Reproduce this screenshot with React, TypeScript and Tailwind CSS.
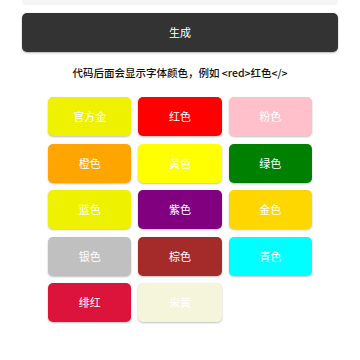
import React from 'react';

const colors: { name: string; bg: string }[] = [
  { name: '官方金', bg: 'bg-[#eef200]' },
  { name: '红色', bg: 'bg-[#ff0000]' },
  { name: '粉色', bg: 'bg-[#ffc0cb]' },
  { name: '橙色', bg: 'bg-[#ffa500]' },
  { name: '黄色', bg: 'bg-[#ffff00]' },
  { name: '绿色', bg: 'bg-[#008000]' },
  { name: '蓝色', bg: 'bg-[#eef200]' },
  { name: '紫色', bg: 'bg-[#800080]' },
  { name: '金色', bg: 'bg-[#ffd700]' },
  { name: '银色', bg: 'bg-[#c0c0c0]' },
  { name: '棕色', bg: 'bg-[#a52a2a]' },
  { name: '青色', bg: 'bg-[#00ffff]' },
  { name: '绯红', bg: 'bg-[#dc143c]' },
  { name: '米黄', bg: 'bg-[#f5f5dc]' },
];

const App: React.FC = () => {
  return (
    <div
      className="w-[360px] h-[360px] bg-white overflow-hidden px-[22px]"
      style={{ fontFamily: '"Noto Sans CJK SC", "Noto Sans", sans-serif' }}
    >
      <div className="h-[5px] bg-[#f5f5f5] rounded-b-[4px]" />
      <button className="mt-[8px] w-full h-[39px] bg-[#333333] rounded-[5px] shadow-[0_1px_2px_rgba(0,0,0,0.3)] text-white text-[11px]">
        生成
      </button>
      <p className="mt-[13px] text-center text-[10.5px] leading-[16px] text-[#111] font-medium">
        代码后面会显示字体颜色，例如 &lt;red&gt;红色&lt;/&gt;
      </p>
      <div className="mt-[16px] mx-[26px] grid grid-cols-3 gap-x-[7px] gap-y-[7.5px]">
        {colors.map((c) => (
          <div
            key={c.name}
            className={`${c.bg} h-[39px] rounded-[5px] shadow-[0_1px_2px_rgba(0,0,0,0.25)] flex items-center justify-center text-white text-[11px]`}
          >
            {c.name}
          </div>
        ))}
      </div>
    </div>
  );
};

export default App;
